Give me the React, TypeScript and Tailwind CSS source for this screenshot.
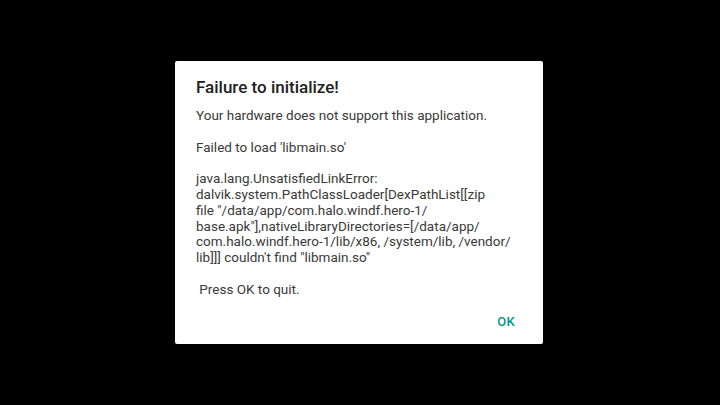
// Lines are broken where the platform text view breaks them (after "/" and spaces).
const lines = [
  "Your hardware does not support this application.",
  "",
  "Failed to load 'libmain.so'",
  "",
  "java.lang.UnsatisfiedLinkError:",
  "dalvik.system.PathClassLoader[DexPathList[[zip",
  'file "/data/app/com.halo.windf.hero-1/',
  'base.apk"],nativeLibraryDirectories=[/data/app/',
  "com.halo.windf.hero-1/lib/x86, /system/lib, /vendor/",
  'lib]]] couldn\'t find "libmain.so"',
  "",
  " Press OK to quit.",
];

export default function App() {
  return (
    <div
      className="flex h-[405px] w-[720px] items-center justify-center bg-black"
      style={{ fontFamily: "Roboto, 'Noto Sans', sans-serif" }}
    >
      <div className="mr-[2px] flex h-[283px] w-[368px] flex-col rounded-[2px] bg-white shadow-lg">
        <h2 className="pl-[21px] pr-5 pt-[15px] text-[17px] font-medium leading-[22px] text-[#212121]">
          Failure to initialize!
        </h2>
        <div className="mt-[10px] pl-[21px] pr-5 text-[13.5px] leading-[15.8px] text-[#3a3a3a]">
          {lines.map((line, i) => (
            <div key={i} className="h-[15.8px] whitespace-pre">
              {line}
            </div>
          ))}
        </div>
        <div className="mt-auto flex justify-end pr-[20px] pb-[7px]">
          <button className="px-2 py-[6px] text-[13px] font-medium uppercase tracking-[0.3px] text-[#009688]">
            OK
          </button>
        </div>
      </div>
    </div>
  );
}
